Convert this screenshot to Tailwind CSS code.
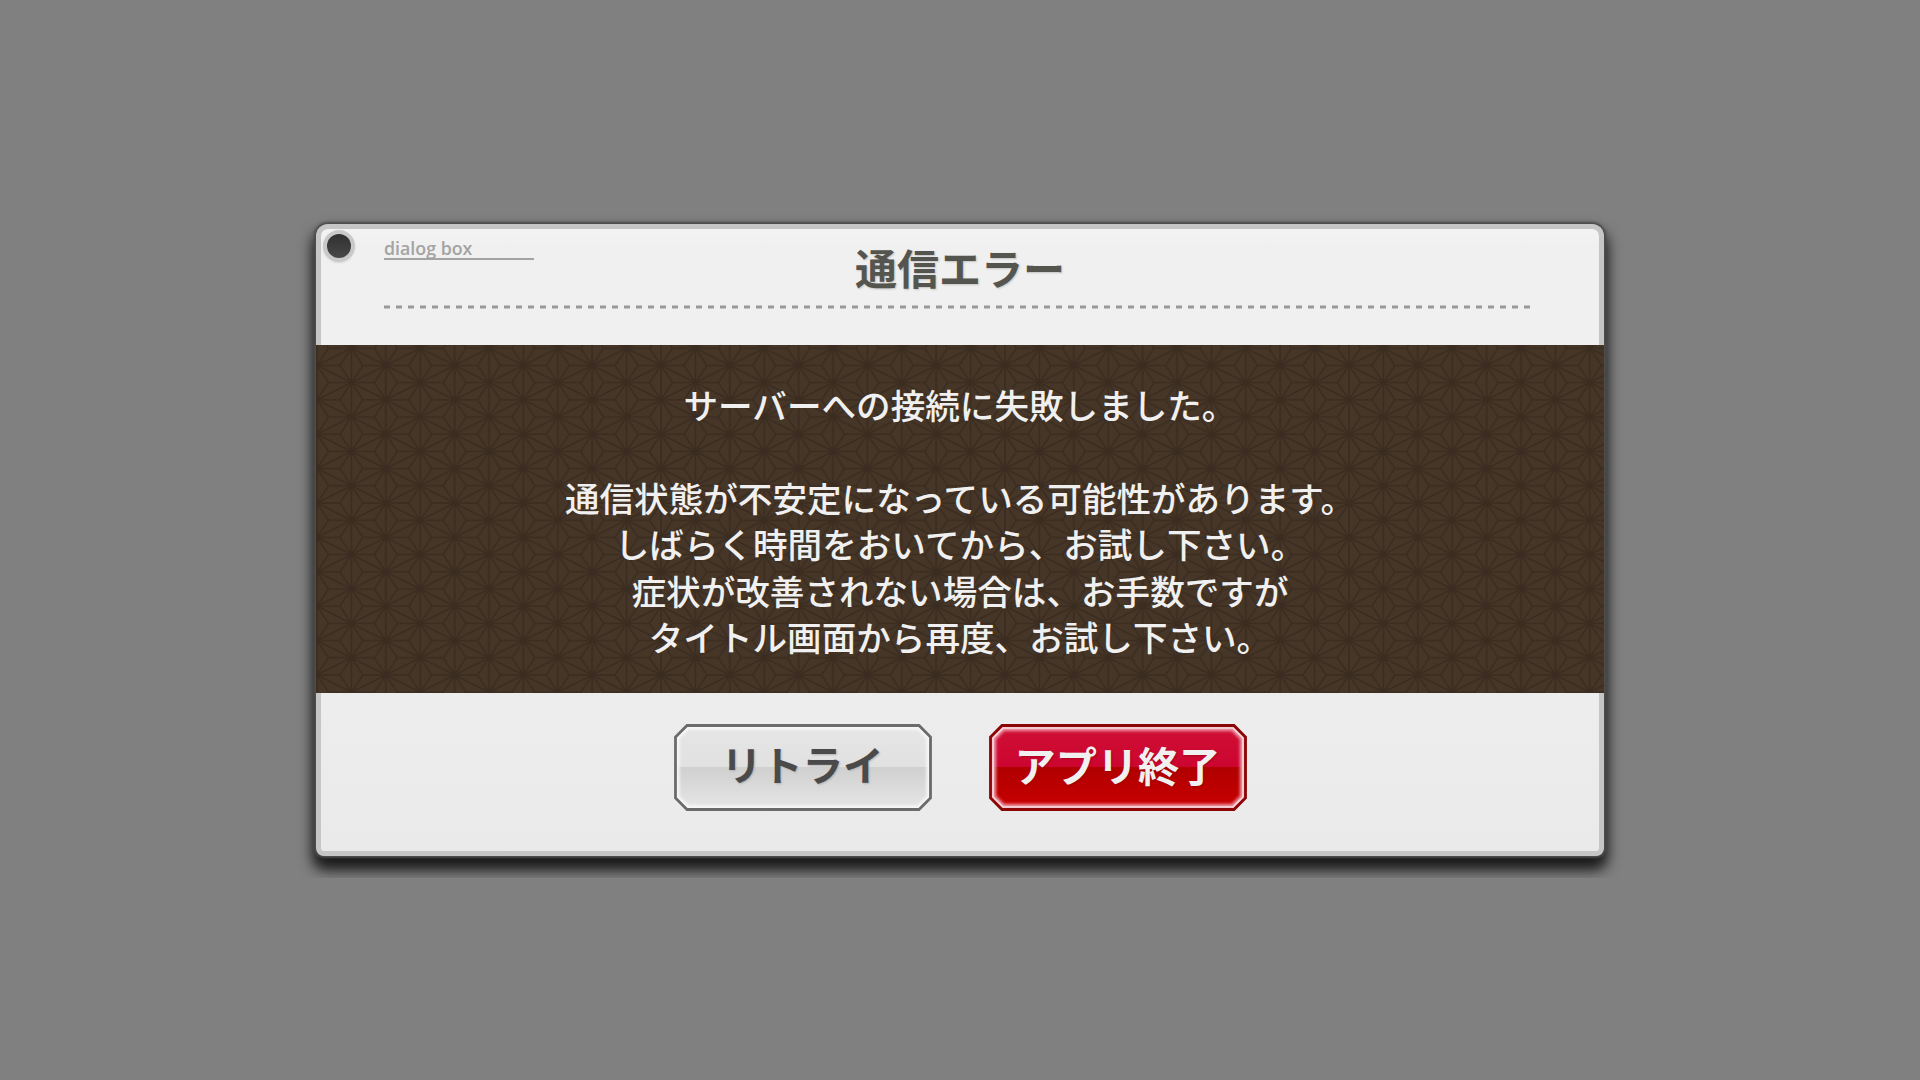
<!DOCTYPE html>
<html lang="ja">
<head>
    <meta charset="UTF-8">
    <meta name="viewport" content="width=device-width, initial-scale=1.0">
    <title>通信エラー</title>
    <script src="https://cdn.jsdelivr.net/npm/@tailwindcss/browser@4"></script>
</head>
<body class="bg-[#808080] h-screen overflow-hidden flex items-center justify-center font-['Noto_Sans_CJK_JP',sans-serif]">
    <!-- wrapper cuts the drop shadow off below the dialog -->
    <div class="px-8 pt-8 pb-[22px] mt-[-11px] overflow-hidden">
        <div class="relative w-[1288px] h-[632px] flex flex-col rounded-[12px_12px_8px_8px] shadow-[0_0_2px_2px_#4d4d4d,0_9px_14px_4px_rgba(0,0,0,0.55),0_12px_14px_0px_rgba(0,0,0,0.6)]">
            <header class="relative h-[121px] shrink-0 rounded-t-[12px] border-[5px] border-b-0 border-[#c6c6c6] bg-linear-to-b from-[#f3f3f3] to-[#f0f0f0] to-15% px-[62px]">
                <div class="absolute left-[2px] top-[1px] size-8 rounded-full bg-[#c9c9c9] flex items-center justify-center shadow-[0_1px_2px_#d8d8d8]">
                    <div class="size-6 rounded-full bg-linear-to-b from-[#303030] to-[#484848]"></div>
                </div>
                <div class="absolute left-[63px] top-[10px] w-[150px] h-[21px] border-b-2 border-[#a3a3a3] text-[#a3a3a3] text-[17.8px] leading-[18px] font-semibold font-['Open_Sans',sans-serif]">dialog box</div>
                <h1 class="pt-[8px] text-center text-[42px] leading-[60px] font-bold text-[#555550] [text-shadow:1px_1px_2px_#c4c4c4]">通信エラー</h1>
                <svg class="absolute left-[63px] top-[76.5px]" width="1147" height="4">
                    <path d="M0 2H1147" stroke="#999" stroke-width="3" stroke-dasharray="6 6"/>
                </svg>
            </header>
            <main class="relative h-[348px] shrink-0 bg-[#463628] flex flex-col">
                <svg class="absolute inset-0 size-full">
                    <defs>
                        <!-- asanoha (hemp leaf) tile -->
                        <pattern id="asanoha" width="68.8" height="34.4" patternUnits="userSpaceOnUse" patternTransform="translate(1 20.4)">
                            <g stroke="#3a2c20" stroke-width="1.7" fill="none">
                                <path d="M0 0V34.4M34.4 0V34.4M68.8 0V34.4"/>
                                <path d="M0 0L68.8 34.4M0 34.4L68.8 0"/>
                                <path d="M0 0L11.5 17.2L0 34.4M68.8 0L57.3 17.2L68.8 34.4M11.5 17.2H57.3"/>
                                <path d="M22.9 0L34.4 17.2L22.9 34.4M45.9 0L34.4 17.2L45.9 34.4"/>
                                <path d="M0 0H22.9M45.9 0H68.8M0 34.4H22.9M45.9 34.4H68.8"/>
                            </g>
                            <g fill="#3a2c20">
                                <circle cx="0" cy="0" r="3"/><circle cx="68.8" cy="0" r="3"/>
                                <circle cx="0" cy="34.4" r="3"/><circle cx="68.8" cy="34.4" r="3"/>
                                <circle cx="34.4" cy="17.2" r="3"/>
                            </g>
                        </pattern>
                    </defs>
                    <rect width="100%" height="100%" fill="url(#asanoha)"/>
                </svg>
                <p class="relative pt-[36px] text-center text-[34.6px] leading-[46.5px] font-medium text-[#f0f0f0]">
                    サーバーへの接続に失敗しました。<br><br>
                    通信状態が不安定になっている可能性があります。<br>
                    しばらく時間をおいてから、お試し下さい。<br>
                    症状が改善されない場合は、お手数ですが<br>
                    タイトル画面から再度、お試し下さい。
                </p>
            </main>
            <footer class="flex-1 rounded-b-[8px] border-[5px] border-t-0 border-[#c6c6c6] bg-linear-to-b from-[#ededed] to-[#eaeaea] flex justify-center gap-[57px] pt-[31px]">
                <button class="relative w-[258px] h-[87px] text-[40.6px] leading-[84px] font-bold text-[#4a4a4a]">
                    <svg class="absolute inset-0" width="258" height="87">
                        <defs>
                            <linearGradient id="gray" x2="0" y2="1">
                                <stop offset="0" stop-color="#e6e6e6"/><stop offset=".5" stop-color="#e1e1e1"/>
                                <stop offset=".5" stop-color="#d0d0d0"/><stop offset="1" stop-color="#e6e6e6"/>
                            </linearGradient>
                            <clipPath id="cut"><path d="M13 2H245L256 13V74L245 85H13L2 74V13Z"/></clipPath>
                            <filter id="soft"><feGaussianBlur stdDeviation="1.8"/></filter>
                        </defs>
                        <path d="M13 1.5H245L256.5 13V74L245 85.5H13L1.5 74V13Z" fill="url(#gray)"/>
                        <path d="M13 2H245L256 13V74L245 85H13L2 74V13Z" fill="none" stroke="#f8f8f8" stroke-width="7" filter="url(#soft)" clip-path="url(#cut)"/>
                        <path d="M13 1.5H245L256.5 13V74L245 85.5H13L1.5 74V13Z" fill="none" stroke="#6b6b6b" stroke-width="2.8"/>
                    </svg>
                    <span class="relative top-[-3px] [text-shadow:1px_1px_2px_#b0b0b0]">リトライ</span>
                </button>
                <button class="relative w-[258px] h-[87px] text-[41.2px] leading-[84px] font-bold text-[#f0f0f0]">
                    <svg class="absolute inset-0" width="258" height="87">
                        <defs>
                            <linearGradient id="red" x2="0" y2="1">
                                <stop offset="0" stop-color="#cf1035"/><stop offset=".5" stop-color="#cc0530"/>
                                <stop offset=".5" stop-color="#b00000"/><stop offset="1" stop-color="#ca0000"/>
                            </linearGradient>
                        </defs>
                        <path d="M13 1.5H245L256.5 13V74L245 85.5H13L1.5 74V13Z" fill="url(#red)"/>
                        <path d="M14 4H244L254 14V73L244 83H14L4 73V14Z" fill="none" stroke="#f09aa8" stroke-width="6" filter="url(#soft)" clip-path="url(#cut)"/>
                        <path d="M14 4H244L254 14V73L244 83H14L4 73V14Z" fill="none" stroke="#f3dde0" stroke-width="1.6"/>
                        <path d="M13 1.5H245L256.5 13V74L245 85.5H13L1.5 74V13Z" fill="none" stroke="#8c0505" stroke-width="2.8"/>
                    </svg>
                    <span class="relative top-[-3px] [text-shadow:1px_1px_2px_#70000060]">アプリ終了</span>
                </button>
            </footer>
        </div>
    </div>
</body>
</html>
